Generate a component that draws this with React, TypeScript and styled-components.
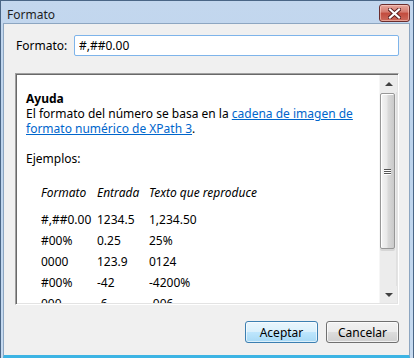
import React from 'react';
import styled, {createGlobalStyle} from 'styled-components';

const GlobalStyle = createGlobalStyle`
  html, body {
    margin: 0;
    padding: 0;
    background: #c4d9ef;
  }
  body {
    font-family: 'Noto Sans', 'Liberation Sans', sans-serif;
    font-size: 12px;
    color: #000;
  }
`;

type Ejemplo = {
  formato: string,
  entrada: string,
  texto: string
}

const ejemplos: Ejemplo[] = [
  {formato: '#,##0.00', entrada: '1234.5', texto: '1,234.50'},
  {formato: '#00%', entrada: '0.25', texto: '25%'},
  {formato: '0000', entrada: '123.9', texto: '0124'},
  {formato: '#00%', entrada: '-42', texto: '-4200%'},
  {formato: '000', entrada: '-6', texto: '-006'},
];

const App: React.FC = () => {
  return (
    <>
      <GlobalStyle />
      <Window>
        <TitleBar>
          <Title>Formato</Title>
          <CloseButton aria-label="Cerrar">
            <svg width="13" height="11" viewBox="0 0 13 11">
              <path d="M2 1.5 L11 9.5 M11 1.5 L2 9.5" stroke="#5a1e1e" strokeWidth="4" strokeLinecap="square" />
              <path d="M2 1.5 L11 9.5 M11 1.5 L2 9.5" stroke="#ffffff" strokeWidth="2.2" strokeLinecap="square" />
            </svg>
          </CloseButton>
        </TitleBar>
        <Client>
          <FieldRow>
            <Label>Formato:</Label>
            <TextBox defaultValue="#,##0.00" />
          </FieldRow>
          <HelpPanel>
            <HelpContent>
              <HelpTitle>Ayuda</HelpTitle>
              <Para>
                El formato del número se basa en la <Link href="#">cadena de imagen de formato numérico de XPath 3</Link>.
              </Para>
              <Para>&nbsp;</Para>
              <Para>Ejemplos:</Para>
              <Table>
                <HeadCell>Formato</HeadCell>
                <HeadCell>Entrada</HeadCell>
                <HeadCell>Texto que reproduce</HeadCell>
                {ejemplos.map((e, i) => (
                  <React.Fragment key={i}>
                    <Cell>{e.formato}</Cell>
                    <Cell>{e.entrada}</Cell>
                    <Cell>{e.texto}</Cell>
                  </React.Fragment>
                ))}
              </Table>
            </HelpContent>
            <ScrollBar>
              <ArrowButton><Arrow up /></ArrowButton>
              <Track>
                <Thumb>
                  <Grip><i /><i /><i /></Grip>
                </Thumb>
              </Track>
              <ArrowButton><Arrow /></ArrowButton>
            </ScrollBar>
          </HelpPanel>
          <ButtonRow>
            <Button primary>Aceptar</Button>
            <Button>Cancelar</Button>
          </ButtonRow>
        </Client>
      </Window>
    </>
  );
}

export default App;

const Window = styled.div`
  box-sizing: border-box;
  width: 414px;
  height: 358px;
  display: flex;
  flex-direction: column;
  border: 1px solid #4a6686;
  border-bottom: none;
  background: linear-gradient(#c3d7ee, #bcd3ec 40%, #c6daf0);
`;

const TitleBar = styled.div`
  height: 24px;
  display: flex;
  align-items: center;
  justify-content: space-between;
  padding: 0 3px 0 6px;
  box-sizing: border-box;
`;

const Title = styled.span`
  font-size: 12px;
  color: #1e1e1e;
  margin-top: 4px;
`;

const CloseButton = styled.div`
  width: 31px;
  height: 18px;
  box-sizing: border-box;
  margin-top: 2px;
  border: 1px solid #6b2d2d;
  border-radius: 3px;
  display: flex;
  align-items: center;
  justify-content: center;
  background: linear-gradient(#e6a79e, #d47a6e 45%, #c24b3d 50%, #cc6a5c);
  box-shadow: inset 0 0 0 1px rgba(255, 220, 210, 0.5);
`;

const Client = styled.div`
  flex: 1;
  display: flex;
  flex-direction: column;
  margin: 0 3px 0 2px;
  padding: 11px 10px 12px 11px;
  background: #f0f0f0;
  border: 1px solid #8da6c1;
  border-bottom: 3px solid #3cb4e4;
`;

const FieldRow = styled.div`
  display: flex;
  align-items: center;
  height: 21px;
`;

const Label = styled.span`
  width: 58px;
  padding-left: 1px;
`;

const TextBox = styled.input`
  flex: 1;
  height: 21px;
  box-sizing: border-box;
  border: 1px solid #7eb4ea;
  border-radius: 2px;
  padding: 0 4px;
  font-family: 'Noto Sans', 'Liberation Sans', sans-serif;
  font-size: 12px;
  background: #fff;
  outline: none;
`;

const HelpPanel = styled.div`
  margin-top: 17px;
  height: 232px;
  box-sizing: border-box;
  display: flex;
  background: #fff;
  border-style: solid;
  border-width: 1px;
  border-color: #a0a0a0 #ffffff #ffffff #a0a0a0;
  box-shadow: inset 1px 1px 0 #696969, inset -1px -1px 0 #e3e3e3;
  padding: 1px;
`;

const HelpContent = styled.div`
  flex: 1;
  overflow: hidden;
  padding: 16px 10px 0 9px;
  line-height: 15px;
`;

const HelpTitle = styled.div`
  font-weight: bold;
`;

const Para = styled.div``;

const Link = styled.a`
  color: #0066cc;
  text-decoration: underline;
`;

const Table = styled.div`
  display: grid;
  grid-template-columns: 56px 52px auto;
  grid-template-rows: 27px;
  grid-auto-rows: 21px;
  margin: 16px 0 0 15px;
  align-items: center;
`;

const HeadCell = styled.div`
  font-style: italic;
  align-self: start;
  line-height: 21px;
`;

const Cell = styled.div`
  white-space: nowrap;
`;

const ScrollBar = styled.div`
  width: 17px;
  display: flex;
  flex-direction: column;
  background: #ececec;
  border-left: 1px solid #f6f6f6;
`;

const ArrowButton = styled.div`
  height: 17px;
  display: flex;
  align-items: center;
  justify-content: center;
`;

const Arrow = styled.span<{up?: boolean}>`
  width: 0;
  height: 0;
  border-left: 4px solid transparent;
  border-right: 4px solid transparent;
  ${p => p.up
    ? 'border-bottom: 4px solid #404040;'
    : 'border-top: 4px solid #404040;'}
`;

const Track = styled.div`
  flex: 1;
  padding: 1px 1px 0 0;
  border-right: 1px solid #e0e0e0;
`;

const Thumb = styled.div`
  height: 156px;
  box-sizing: border-box;
  border: 1px solid #979797;
  border-radius: 2px;
  background: linear-gradient(to right, #f4f4f4, #e8e8e8 45%, #d9d9d9 55%, #cacaca);
  box-shadow: inset 1px 1px 0 #fff, 0 2px 0 #d6d6d6;
  display: flex;
  align-items: center;
  justify-content: center;
`;

const Grip = styled.div`
  display: flex;
  flex-direction: column;
  gap: 1px;
  i {
    display: block;
    width: 7px;
    height: 1px;
    background: #555;
    box-shadow: 0 1px 0 #fff;
  }
`;

const ButtonRow = styled.div`
  margin-top: 16px;
  display: flex;
  justify-content: flex-end;
  gap: 8px;
`;

const Button = styled.button<{primary?: boolean}>`
  width: 73px;
  height: 22px;
  box-sizing: border-box;
  border-radius: 3px;
  font-family: 'Noto Sans', 'Liberation Sans', sans-serif;
  font-size: 12px;
  color: #000;
  padding: 0;
  border: 1px solid ${p => p.primary ? '#3c7fb1' : '#707070'};
  background: ${p => p.primary
    ? 'linear-gradient(#eaf6fd, #d9f0fc 50%, #bee6fd 51%, #a7d9f5)'
    : 'linear-gradient(#f2f2f2, #ebebeb 50%, #dddddd 51%, #cfcfcf)'};
  box-shadow: inset 0 0 0 1px ${p => p.primary ? 'rgba(255,255,255,0.6)' : 'rgba(255,255,255,0.7)'};
`;
